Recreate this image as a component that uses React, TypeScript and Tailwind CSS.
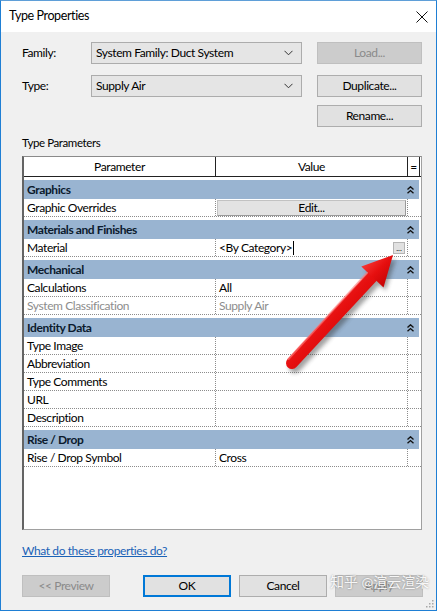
import React from "react";

const font = { fontFamily: 'Lato, "Noto Sans CJK SC", sans-serif' };

function Chevron() {
  return (
    <svg width="9" height="6" viewBox="0 0 9 6" className="shrink-0">
      <path d="M0.5 0.8 L4.5 4.8 L8.5 0.8" fill="none" stroke="#333" strokeWidth="1" />
    </svg>
  );
}

function DoubleUp() {
  return (
    <svg width="7" height="8" viewBox="0 0 7 8">
      <path d="M0.5 3.5 L3.5 0.8 L6.5 3.5 M0.5 7.3 L3.5 4.6 L6.5 7.3" fill="none" stroke="#111" strokeWidth="1.4" />
    </svg>
  );
}

function Select({ value }: { value: string }) {
  return (
    <div className="w-[211px] h-[22px] flex items-center justify-between pl-[4px] pr-[8px] bg-[#e5e5e5] border border-[#acacac] text-black">
      <span>{value}</span>
      <Chevron />
    </div>
  );
}

function Btn({
  label,
  disabled,
  focused,
  w = "w-[105px]",
}: {
  label: string;
  disabled?: boolean;
  focused?: boolean;
  w?: string;
}) {
  return (
    <div
      className={`${w} h-[22px] flex items-center justify-center ${
        disabled
          ? "bg-[#cccccc] border border-[#bfbfbf] text-[#8a8a8a]"
          : focused
          ? "bg-[#e1e1e1] border-2 border-[#0078d7] text-black"
          : "bg-[#e1e1e1] border border-[#adadad] text-black"
      }`}
    >
      {label}
    </div>
  );
}

type Row = { name: string; value?: string; gray?: boolean; kind?: "edit" | "material" };
type Group = { title: string; rows: Row[] };

const groups: Group[] = [
  { title: "Graphics", rows: [{ name: "Graphic Overrides", kind: "edit" }] },
  { title: "Materials and Finishes", rows: [{ name: "Material", kind: "material" }] },
  {
    title: "Mechanical",
    rows: [
      { name: "Calculations", value: "All" },
      { name: "System Classification", value: "Supply Air", gray: true },
    ],
  },
  {
    title: "Identity Data",
    rows: [
      { name: "Type Image" },
      { name: "Abbreviation" },
      { name: "Type Comments" },
      { name: "URL" },
      { name: "Description" },
    ],
  },
  { title: "Rise / Drop", rows: [{ name: "Rise / Drop Symbol", value: "Cross" }] },
];

const dotted = "border-dotted border-[#8c8c8c]";

function ParamRow({ row }: { row: Row }) {
  return (
    <div className={`flex h-[18px] border-b ${dotted} ${row.gray ? "text-[#8d8d8d]" : "text-black"}`}>
      <div className={`w-[192px] pl-[3px] flex items-center border-r ${dotted}`}>{row.name}</div>
      <div className={`w-[192px] flex items-center border-r ${dotted} ${row.kind === "edit" ? "px-[1px]" : "pl-[3px] pr-[2px]"}`}>
        {row.kind === "edit" ? (
          <div className="w-full h-[16px] flex items-center justify-center bg-[#e3e3e3] border border-[#c2c2c2] border-b-[#9a9a9a] border-r-[#9a9a9a]">
            Edit...
          </div>
        ) : row.kind === "material" ? (
          <div className="w-full flex items-center justify-between">
            <span className="flex items-center">
              &lt;By Category&gt;
              <span className="inline-block w-[1px] h-[14px] bg-black ml-[1px]" />
            </span>
            <span className="w-[12px] h-[12px] bg-[#e1e1e1] border border-[#b5b5b5] text-[8px] leading-[8px] tracking-normal flex items-end justify-center pb-[1px]">
              ...
            </span>
          </div>
        ) : (
          row.value
        )}
      </div>
      <div className="flex-1" />
    </div>
  );
}

function Arrow() {
  return (
    <svg
      className="absolute left-0 top-0 pointer-events-none"
      width="437"
      height="611"
      viewBox="0 0 437 611"
    >
      <defs>
        <linearGradient id="rg" x1="0" y1="0" x2="1" y2="1">
          <stop offset="0" stopColor="#ff4a4a" />
          <stop offset="0.5" stopColor="#e60f0f" />
          <stop offset="1" stopColor="#b80000" />
        </linearGradient>
        <filter id="sh" x="-20%" y="-20%" width="140%" height="140%">
          <feGaussianBlur stdDeviation="2" />
        </filter>
      </defs>
      <g transform="translate(3 4)" opacity="0.45" filter="url(#sh)">
        <line x1="291" y1="362" x2="371" y2="276" stroke="#333" strokeWidth="12" strokeLinecap="round" />
        <polygon points="392,254 381.7,285.4 361.3,266.3" fill="#333" />
      </g>
      <line x1="291" y1="362" x2="371" y2="276" stroke="url(#rg)" strokeWidth="12" strokeLinecap="round" />
      <polygon points="392,254 382.5,286.5 360.3,265.5" fill="url(#rg)" />
      <line x1="287.5" y1="358" x2="366" y2="272" stroke="#ff7a7a" strokeWidth="2" strokeLinecap="round" opacity="0.6" />
    </svg>
  );
}

export default function App() {
  return (
    <div
      className="relative w-[437px] h-[611px] bg-[#f0f0f0] border border-[#1f7fd4] border-t-[#5f9fd8] overflow-hidden text-[12px] tracking-[-0.4px]"
      style={font}
    >
      {/* Title bar */}
      <div className="h-[31px] bg-white flex items-center justify-between pl-[8px] pr-[8px]">
        <span className="text-[12.5px] text-black">Type Properties</span>
        <svg width="12" height="12" viewBox="0 0 12 12">
          <path d="M0.5 0.5 L11.5 11.5 M11.5 0.5 L0.5 11.5" stroke="#111" strokeWidth="1" />
        </svg>
      </div>

      {/* Family / Type */}
      <div className="pl-[21px] pr-[14px] pt-[10px]">
        <div className="flex items-center h-[22px]">
          <span className="w-[69px] text-black">Family:</span>
          <Select value="System Family: Duct System" />
          <div className="ml-[15px]">
            <Btn label="Load..." disabled />
          </div>
        </div>
        <div className="flex items-center h-[22px] mt-[11px]">
          <span className="w-[69px] text-black">Type:</span>
          <Select value="Supply Air" />
          <div className="ml-[15px]">
            <Btn label="Duplicate..." />
          </div>
        </div>
        <div className="flex justify-end mt-[8px]">
          <Btn label="Rename..." />
        </div>
        <div className="text-[11.5px] text-black mt-[9px] leading-[14px]">Type Parameters</div>
      </div>

      {/* Table */}
      <div className="ml-[21px] mt-[6px] w-[400px] h-[374px] bg-white border border-[#a0a0a0] border-l-2 border-l-[#646464] border-t-[#8a8a8a]">
        <div className="flex h-[20px] border-b border-[#222] text-black">
          <div className="w-[192px] flex items-center justify-center border-r border-[#222]">Parameter</div>
          <div className="w-[192px] flex items-center justify-center border-r border-[#222]">Value</div>
          <div className="w-[12px] flex items-center justify-center border-r border-[#222]">=</div>
        </div>
        {groups.map((g) => (
          <div key={g.title} className="pt-[3px]">
            <div className="h-[19px] bg-[#99b4d1] flex items-center justify-between pl-[3px] pr-[5px] mr-[2px] font-bold text-[#0b1a2d]">
              <span>{g.title}</span>
              <DoubleUp />
            </div>
            {g.rows.map((r) => (
              <ParamRow key={r.name} row={r} />
            ))}
          </div>
        ))}
      </div>

      {/* Link */}
      <div className="pl-[21px] mt-[13px] text-[#1a62b7] underline leading-[16px]">
        What do these properties do?
      </div>

      {/* Bottom buttons */}
      <div className="flex items-center pl-[21px] mt-[16px]">
        <Btn label="<< Preview" disabled w="w-[88px]" />
        <div className="ml-[33px]">
          <Btn label="OK" focused w="w-[88px]" />
        </div>
        <div className="ml-[8px]">
          <Btn label="Cancel" w="w-[88px]" />
        </div>
        <div className="ml-[8px]">
          <Btn label="Apply" disabled w="w-[88px]" />
        </div>
      </div>

      <Arrow />

      {/* watermark */}
      <div className="absolute left-[329px] top-[572px] whitespace-nowrap text-[14px] leading-[18px] tracking-normal text-white/90 [text-shadow:0_0_2px_rgba(0,0,0,0.4)]">
        知乎 @渲云渲染
      </div>

      {/* resize grip */}
      <svg className="absolute right-[2px] bottom-[2px]" width="8" height="8" viewBox="0 0 8 8">
        <rect x="6" y="0" width="1.5" height="1.5" fill="#a8a8a8" />
        <rect x="3" y="3" width="1.5" height="1.5" fill="#a8a8a8" />
        <rect x="6" y="3" width="1.5" height="1.5" fill="#a8a8a8" />
        <rect x="0" y="6" width="1.5" height="1.5" fill="#a8a8a8" />
        <rect x="3" y="6" width="1.5" height="1.5" fill="#a8a8a8" />
        <rect x="6" y="6" width="1.5" height="1.5" fill="#a8a8a8" />
      </svg>
    </div>
  );
}
